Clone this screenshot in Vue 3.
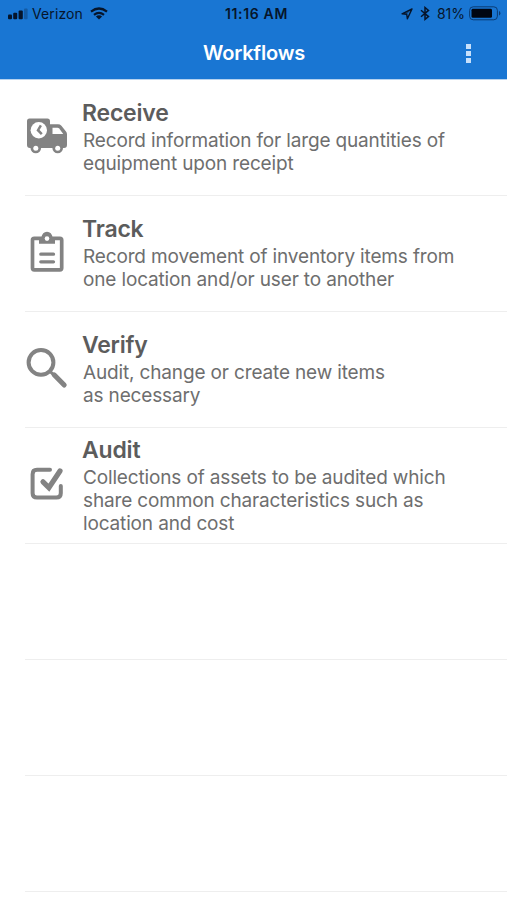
<script setup>
const workflows = [
  { name: 'Receive', icon: 'truck', lines: ['Record information for large quantities of', 'equipment upon receipt'] },
  { name: 'Track', icon: 'clipboard', lines: ['Record movement of inventory items from', 'one location and/or user to another'] },
  { name: 'Verify', icon: 'search', lines: ['Audit, change or create new items', 'as necessary'] },
  { name: 'Audit', icon: 'check', lines: ['Collections of assets to be audited which', 'share common characteristics such as', 'location and cost'] },
]
const emptyRows = 3
</script>

<template>
  <main class="screen">
    <header class="header">
      <div class="status">
        <div class="side">
          <svg class="signal" width="20" height="12" viewBox="0 0 20 12">
            <rect x="0" y="6.4" width="4" height="4.8" rx="1" />
            <rect x="5.2" y="4.8" width="4" height="6.4" rx="1" />
            <rect x="10.6" y="2.4" width="4.2" height="8.8" rx="1" />
            <rect x="16" y="0.4" width="3.6" height="10.8" rx="1" opacity=".28" />
          </svg>
          <span class="carrier">Verizon</span>
          <svg class="wifi" width="18" height="13" viewBox="0 0 18 13">
            <g fill="none" stroke="#06152b" stroke-width="2.2">
              <path d="M1 4.7 Q9 -1.7 17 4.7" />
              <path d="M4 7.9 Q9 3.9 14 7.9" />
            </g>
            <path d="M5.9 9.4 Q9 7 12.1 9.4 L9 12.5Z" fill="#06152b" />
          </svg>
        </div>
        <span class="time">11:16 AM</span>
        <div class="side right">
          <svg class="arrow" width="12" height="12" viewBox="0 0 12 12">
            <path d="M11 .9 L1 5.8 L5.7 6.2 L6.4 10.8Z" fill="none" stroke="#06152b" stroke-width="1.4" stroke-linejoin="round" />
            <path d="M11 .9 L1 5.8 L5.7 6.2Z" fill="#06152b" opacity=".5" />
          </svg>
          <svg class="bluetooth" width="10" height="15" viewBox="0 0 10 15">
            <path d="M1 4.2 L8.5 10.6 L5 13.4 V1.5 L8.5 4.4 L1 10.8" fill="none" stroke="#06152b" stroke-width="1.5" />
          </svg>
          <span class="percent">81%</span>
          <svg class="battery" width="32" height="15" viewBox="0 0 32 15">
            <rect x=".6" y=".8" width="27.8" height="13" rx="3.6" fill="none" stroke="#0b3c74" stroke-width="1" />
            <rect x="2.5" y="2.8" width="20.5" height="9" rx="1.4" fill="#000612" />
            <path d="M30 5 Q31.4 5.6 31.4 7.3 Q31.4 9 30 9.6Z" fill="#0b3c74" />
          </svg>
        </div>
      </div>
      <div class="nav">
        <h1>Workflows</h1>
        <button class="more" aria-label="More"><i /><i /><i /></button>
      </div>
    </header>
    <ul class="list">
      <li v-for="w in workflows" :key="w.name" class="row">
        <div class="icon">
          <svg v-if="w.icon === 'truck'" width="43" height="42" viewBox="0 0 43 42">
            <path d="M4.5 3.6 H22.4 Q25 3.6 25 6.2 V9.3 H33 Q35 9.3 36.4 10.7 L41 16.4 Q42 17.6 42 19.4 V29.8 Q42 33 39 33 H5 Q2 33 2 30 V6.2 Q2 3.6 4.5 3.6Z" />
            <circle cx="10.8" cy="33" r="5.3" /><circle cx="32.7" cy="33" r="5.3" />
            <g fill="#fff">
              <circle cx="10.8" cy="33.2" r="2.5" /><circle cx="32.7" cy="33.2" r="2.5" />
              <circle cx="13.8" cy="15.2" r="8.2" />
              <path d="M27.5 12.8 H32.5 Q33.5 12.8 34.2 13.6 L38.2 19 H27.5Z" />
            </g>
            <path d="M15.9 10.3 L13 15.2 L16.8 19.2" fill="none" stroke="#838383" stroke-width="2.5" />
          </svg>
          <svg v-else-if="w.icon === 'clipboard'" width="43" height="42" viewBox="0 0 43 42">
            <rect x="7.5" y="7.3" width="29.2" height="31.5" rx="1.8" fill="none" stroke="#838383" stroke-width="3.7" />
            <path d="M14 7 H16.2 Q17.4 .8 22 .8 Q26.6 .8 27.8 7 H30 V12.8 H14Z" />
            <circle cx="22" cy="7.6" r="2.3" fill="#fff" />
            <path d="M15.8 23.2 H28.5 M15.8 30.8 H28.5" fill="none" stroke="#838383" stroke-width="3.3" stroke-linecap="round" />
          </svg>
          <svg v-else-if="w.icon === 'search'" width="43" height="42" viewBox="0 0 43 42">
            <circle cx="16" cy="15.4" r="12.4" fill="none" stroke="#838383" stroke-width="4" />
            <path d="M25 24.3 L30 29" fill="none" stroke="#838383" stroke-width="3" />
            <path d="M29.1 27.8 L39.2 38" fill="none" stroke="#838383" stroke-width="5" stroke-linecap="round" />
          </svg>
          <svg v-else width="43" height="42" viewBox="0 0 43 42">
            <g fill="none" stroke="#838383" stroke-linecap="round">
              <path d="M25 6.8 H12 Q7.6 6.8 7.6 11.2 V30.3 Q7.6 34.6 12 34.6 H31.4 Q35.8 34.6 35.8 30.3 V23" stroke-width="4" />
              <path d="M18 18.8 L23.9 24.6 L35 8" stroke-width="5.2" stroke-linejoin="miter" />
            </g>
          </svg>
        </div>
        <div class="copy">
          <h2>{{ w.name }}</h2>
          <p><span v-for="line in w.lines" :key="line" class="line">{{ line }}</span></p>
        </div>
      </li>
      <li v-for="n in emptyRows" :key="n" class="row" />
    </ul>
  </main>
</template>

<style>
body { margin: 0; background: #fff; }
</style>

<style scoped>
.screen { width: 507px; height: 900px; overflow: hidden; background: #fff; font-family: Inter, "Liberation Sans", sans-serif; }
.header { height: 79px; background: #1976d3; box-shadow: 0 1px 0 #b5d2ef; }
.status { height: 27px; display: grid; grid-template-columns: 1fr auto 1fr; align-items: center; padding: 0 6px 0 8px; color: #06152b; font-size: 14px; line-height: 27px; }
.side { display: flex; align-items: center; }
.right { justify-content: flex-end; }
.signal { fill: #06152b; margin-right: 4px; }
.carrier { letter-spacing: .1px; }
.wifi { margin-left: 7px; }
.time { padding-left: 4px; font-weight: 600; font-size: 14px; letter-spacing: .65px; }
.bluetooth { margin-left: 7px; }
.percent { margin: 0 4px 0 7px; font-size: 14px; }
.nav { height: 52px; display: grid; grid-template-columns: 1fr auto 1fr; align-items: center; }
h1 { grid-column: 2; margin: 0; padding-left: 1px; color: #fff; font-size: 20px; line-height: 52px; font-weight: 600; letter-spacing: -.2px; }
.more { justify-self: end; display: flex; flex-direction: column; gap: 2px; margin: 0 36px 0 0; padding: 0; border: 0; background: none; }
.more i { width: 5px; height: 5px; background: #c7e0fb; }
.list { margin: 0; padding: 0 0 0 25px; list-style: none; }
.row { box-sizing: border-box; height: 116.1px; display: flex; align-items: center; border-bottom: 1px solid #eee; }
.row:first-child { height: 116.5px; }
.icon { width: 43px; height: 42px; margin-bottom: 2px; flex: none; fill: #838383; }
.icon svg { display: block; }
.copy { margin-left: 14px; padding-top: .5px; }
h2 { margin: 0; color: #5c5c5c; font-size: 23px; line-height: 29px; font-weight: 600; letter-spacing: -.2px; }
p { margin: 0; padding: 1px 0 0 1px; color: #6e6e6e; font-size: 19px; line-height: 23.3px; letter-spacing: -.15px; }
.line { display: block; white-space: nowrap; }
</style>
